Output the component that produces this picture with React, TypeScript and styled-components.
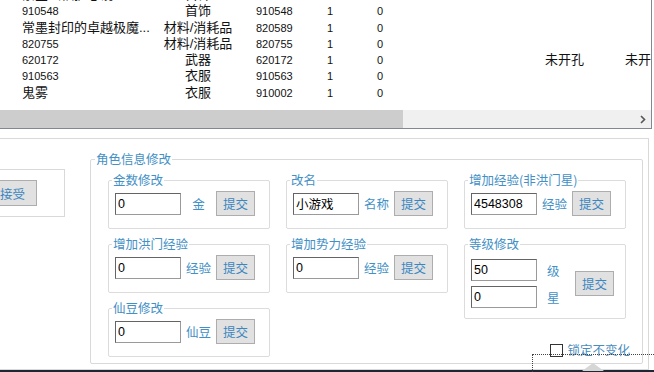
import styled, {createGlobalStyle} from "styled-components";

const GlobalStyle = createGlobalStyle`
    html, body {
        margin: 0;
        padding: 0;
        background: #fff;
    }
    body {
        width: 654px;
        height: 372px;
        overflow: hidden;
        font-family: "Liberation Sans", "Noto Sans CJK SC", sans-serif;
    }
`;

const BLUE = "#4390c6";

const Page = styled.div`
    position: relative;
    width: 654px;
    height: 372px;
    overflow: hidden;
    display: flex;
    flex-direction: column;
    background: #fff;
`;

// 物品列表
const List = styled.div`
    width: 652px;
    height: 129px;
    box-sizing: border-box;
    flex-shrink: 0;
    border-right: 1px solid #828790;
    border-bottom: 1px solid #828790;
    display: flex;
    flex-direction: column;
    overflow: hidden;
`;
const Rows = styled.div`
    flex: 1;
    overflow: hidden;
`;
const RowsInner = styled.div`
    margin-top: -13px;
`;
const Row = styled.div`
    display: grid;
    grid-template-columns: 162px 72px 93px 50px 168px 80px 80px;
    height: 16.25px;
    align-items: center;
    white-space: nowrap;
    color: #111;
`;
const Cell = styled.div<{ $center?: boolean; $pad?: number; $num?: boolean }>`
    text-align: ${p => (p.$center ? "center" : "left")};
    padding-left: ${p => p.$pad ?? 0}px;
    font-size: ${p => (p.$num ? "11px" : "13px")};
    line-height: 16px;
    overflow: hidden;
`;
const ScrollBar = styled.div`
    height: 18px;
    display: flex;
    background: #f0f0f0;
`;
const Thumb = styled.div`
    width: 403px;
    background: #cdcdcd;
`;
const Track = styled.div`
    flex: 1;
`;
const ArrowBtn = styled.div`
    width: 17px;
    display: flex;
    align-items: center;
    justify-content: center;
`;

// 下方面板
const Panel = styled.div`
    margin-top: 9px;
    margin-left: -30px;
    width: 679px;
    box-sizing: border-box;
    flex-shrink: 0;
    border: 1px solid #d9d9d9;
    border-left: none;
    padding: 12px 0 5px 0;
    display: flex;
    align-items: flex-start;
`;
const SideBox = styled.div`
    margin-top: 18px;
    width: 95px;
    height: 48px;
    box-sizing: border-box;
    border: 1px solid #d9d9d9;
    border-left: none;
    padding-left: 18px;
    display: flex;
    align-items: center;
`;
const Button = styled.button<{ $w?: number; $h?: number }>`
    width: ${p => p.$w ?? 39}px;
    height: ${p => p.$h ?? 25}px;
    padding: 0;
    flex-shrink: 0;
    background: #e1e1e1;
    border: 1px solid #adadad;
    color: #3a86c0;
    font-family: "Noto Sans CJK SC", sans-serif;
    font-size: 12.5px;
    cursor: pointer;
`;
const MainGroup = styled.fieldset`
    margin: 0 0 0 25px;
    min-width: 0;
    width: 553px;
    box-sizing: border-box;
    border: 1px solid #d9d9d9;
    border-radius: 2px;
    padding: 5px 16px 5px 17px;
`;
const Legend = styled.legend<{ $shift: number }>`
    margin-left: ${p => p.$shift}px;
    padding: 0 1px;
    font-family: "Noto Sans CJK SC", sans-serif;
    font-size: 12.5px;
    line-height: 16px;
    color: ${BLUE};
`;
const Columns = styled.div`
    display: grid;
    grid-template-columns: repeat(3, 162px);
    column-gap: 16px;
    align-items: stretch;
`;
const Column = styled.div`
    display: flex;
    flex-direction: column;
    gap: 7px;
`;
const Group = styled.fieldset`
    margin: 0;
    min-width: 0;
    width: 162px;
    box-sizing: border-box;
    border: 1px solid #dcdcdc;
    border-radius: 2px;
    padding: 3px 14px 12px 6px;
`;
const FieldRow = styled.div`
    display: flex;
    align-items: center;
    height: 25px;
`;
const Input = styled.input`
    width: 66px;
    height: 22px;
    box-sizing: border-box;
    margin: 0;
    padding: 0 2px;
    border: 1px solid;
    border-color: #646464 #9a9a9a #9a9a9a #646464;
    background: #fff;
    color: #000;
    font-family: "Liberation Sans", "Noto Sans CJK SC", sans-serif;
    font-size: 12.5px;
    outline: none;
`;
const Unit = styled.span`
    flex: 1;
    text-align: center;
    color: ${BLUE};
    font-family: "Noto Sans CJK SC", sans-serif;
    font-size: 12.5px;
    white-space: nowrap;
`;
const LevelBody = styled.div`
    display: flex;
    align-items: center;
    margin: 4px 0 -2px;
`;
const LevelInputs = styled.div`
    display: flex;
    flex-direction: column;
    gap: 5px;
`;
const LevelRow = styled.div`
    display: flex;
    align-items: center;
`;
const LevelUnit = styled.span`
    margin-left: 10px;
    color: ${BLUE};
    font-family: "Noto Sans CJK SC", sans-serif;
    font-size: 12.5px;
`;
const LevelSubmit = styled.div`
    margin-left: auto;
    margin-right: -3px;
`;
const CheckRow = styled.label`
    align-self: flex-end;
    margin: 16px -4px 0 0;
    display: flex;
    align-items: center;
    gap: 4px;
    color: #4a8cbc;
    font-family: "Noto Sans CJK SC", sans-serif;
    font-size: 12.5px;
    line-height: 16px;
`;
const CheckBox = styled.input`
    appearance: none;
    margin: 0;
    width: 13px;
    height: 13px;
    border: 1px solid #333;
    background: #fff;
`;
const FocusRect = styled.div`
    position: absolute;
    left: 532px;
    top: 354px;
    width: 140px;
    height: 30px;
    border: 1px dotted #444;
`;
const Caret = styled.div`
    position: absolute;
    left: 582px;
    top: 363px;
    width: 0;
    height: 0;
    border-left: 11px solid transparent;
    border-right: 11px solid transparent;
    border-bottom: 8px solid #d6d6d6;
    z-index: 2;
`;
const DarkBar = styled.div`
    margin-top: auto;
    height: 2px;
    background: #1d2734;
`;

const items = [
    ["紫金玄铁护心镜", "首饰", "910547", "1", "0", "", ""],
    ["910548", "首饰", "910548", "1", "0", "", ""],
    ["常墨封印的卓越极魔...", "材料/消耗品", "820589", "1", "0", "", ""],
    ["820755", "材料/消耗品", "820755", "1", "0", "", ""],
    ["620172", "武器", "620172", "1", "0", "未开孔", "未开孔"],
    ["910563", "衣服", "910563", "1", "0", "", ""],
    ["鬼雾", "衣服", "910002", "1", "0", "", ""],
];

const isNum = (v: string) => /^[\d.]+$/.test(v);

function SimpleGroup({title, value, unit}: { title: string; value: string; unit: string }) {
    return (
        <Group>
            <Legend $shift={-3}>{title}</Legend>
            <FieldRow>
                <Input defaultValue={value}/>
                <Unit>{unit}</Unit>
                <Button>提交</Button>
            </FieldRow>
        </Group>
    );
}

function App() {
    return (
        <Page>
            <GlobalStyle/>
            <List>
                <Rows>
                    <RowsInner>
                        {items.map((r, i) => (
                            <Row key={i}>
                                <Cell $pad={22} $num={isNum(r[0])}>{r[0]}</Cell>
                                <Cell $center>{r[1]}</Cell>
                                <Cell $pad={22} $num>{r[2]}</Cell>
                                <Cell $num>{r[3]}</Cell>
                                <Cell $num>{r[4]}</Cell>
                                <Cell>{r[5]}</Cell>
                                <Cell>{r[6]}</Cell>
                            </Row>
                        ))}
                    </RowsInner>
                </Rows>
                <ScrollBar>
                    <Thumb/>
                    <Track/>
                    <ArrowBtn>
                        <svg width="6" height="9" viewBox="0 0 6 9">
                            <path d="M1 1 L4.5 4.5 L1 8" fill="none" stroke="#555" strokeWidth="1.6"/>
                        </svg>
                    </ArrowBtn>
                </ScrollBar>
            </List>

            <Panel>
                <SideBox>
                    <Button $w={49} $h={26}>接受</Button>
                </SideBox>
                <MainGroup>
                    <Legend $shift={-13}>角色信息修改</Legend>
                    <Columns>
                        <Column>
                            <SimpleGroup title="金数修改" value="0" unit="金"/>
                            <SimpleGroup title="增加洪门经验" value="0" unit="经验"/>
                            <SimpleGroup title="仙豆修改" value="0" unit="仙豆"/>
                        </Column>
                        <Column>
                            <SimpleGroup title="改名" value="小游戏" unit="名称"/>
                            <SimpleGroup title="增加势力经验" value="0" unit="经验"/>
                        </Column>
                        <Column>
                            <SimpleGroup title="增加经验(非洪门星)" value="4548308" unit="经验"/>
                            <Group>
                                <Legend $shift={-3}>等级修改</Legend>
                                <LevelBody>
                                    <LevelInputs>
                                        <LevelRow>
                                            <Input defaultValue="50"/>
                                            <LevelUnit>级</LevelUnit>
                                        </LevelRow>
                                        <LevelRow>
                                            <Input defaultValue="0"/>
                                            <LevelUnit>星</LevelUnit>
                                        </LevelRow>
                                    </LevelInputs>
                                    <LevelSubmit>
                                        <Button>提交</Button>
                                    </LevelSubmit>
                                </LevelBody>
                            </Group>
                            <CheckRow>
                                <CheckBox type="checkbox"/>
                                锁定不变化
                            </CheckRow>
                        </Column>
                    </Columns>
                </MainGroup>
            </Panel>
            <DarkBar/>
            <FocusRect/>
            <Caret/>
        </Page>
    );
}

export default App;
